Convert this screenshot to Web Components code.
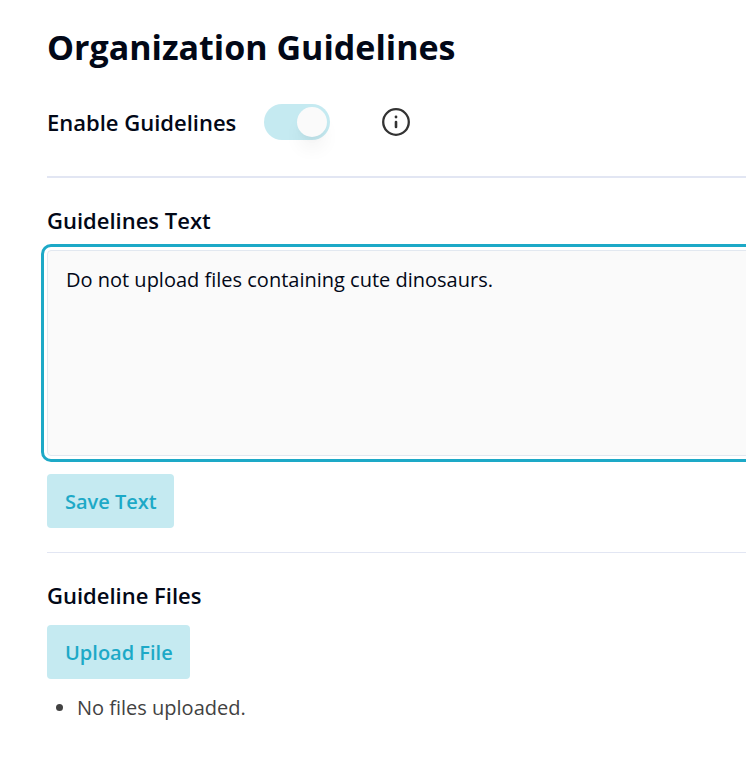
<!DOCTYPE html>
<html lang="en">
<head>
<meta charset="utf-8">
<meta name="viewport" content="width=device-width, initial-scale=1">
<title>Organization Guidelines</title>
<style>
  body {
    margin: 0;
    background: #fff;
    color: #020817;
    font-family: "Segoe UI", "Open Sans", "Noto Sans", sans-serif;
    font-size: 20px;
    line-height: 30px;
    --accent: #1da9c7;
    --accent-soft: #c5eaf1;
    --border: #e2e8f0;
    --divider: #e2e6f3;
    --surface: #fafafa;
    --muted: #424242;
  }
</style>
</head>
<body>
<guidelines-page>
  <guidelines-toggle slot="toggle">Enable Guidelines</guidelines-toggle>
  <guidelines-text slot="text" value="Do not upload files containing cute dinosaurs.">Guidelines Text</guidelines-text>
  <guidelines-files slot="files">Guideline Files</guidelines-files>
</guidelines-page>

<script>
function createTemplate(html) {
  const template = document.createElement('template');
  template.innerHTML = html;
  return template;
}

class BaseElement extends HTMLElement {
  constructor() {
    super();
    this.attachShadow({ mode: 'open' });
    this.shadowRoot.appendChild(this.constructor.template.content.cloneNode(true));
  }
}

class SoftButton extends BaseElement {
  static template = createTemplate(`
    <style>
      :host {
        display: block;
      }
      button {
        display: block;
        padding: 13px 17px 11px 18px;
        border: 0;
        border-radius: 4px;
        background: var(--accent-soft);
        color: var(--accent);
        font: inherit;
        font-weight: 600;
        cursor: pointer;
      }
    </style>
    <button type="button"><slot></slot></button>
  `);
}

class InfoButton extends BaseElement {
  static template = createTemplate(`
    <style>
      :host {
        display: block;
      }
      button {
        display: block;
        padding: 0;
        border: 0;
        background: none;
        color: #333;
        cursor: pointer;
      }
      svg {
        display: block;
      }
    </style>
    <button type="button" aria-label="About guidelines">
      <svg width="28" height="28" viewBox="0 0 28 28" fill="none" stroke="currentColor" aria-hidden="true">
        <circle cx="14" cy="14" r="12.8" stroke-width="2.3"/>
        <path d="M14 14v5" stroke-width="2.6" stroke-linecap="round"/>
        <circle cx="14" cy="9" r="1.4" fill="currentColor" stroke="none"/>
      </svg>
    </button>
  `);
}

class GuidelinesToggle extends BaseElement {
  static template = createTemplate(`
    <style>
      :host {
        display: flex;
        align-items: center;
      }
      label {
        padding-right: 28px;
        font-size: 22px;
        line-height: 38px;
        font-weight: 600;
      }
      input {
        appearance: none;
        display: flex;
        align-items: center;
        flex: none;
        box-sizing: border-box;
        width: 66px;
        height: 36px;
        margin: 0;
        padding: 0 3px;
        border-radius: 18px;
        background: var(--border);
        cursor: pointer;
      }
      input::before {
        content: "";
        width: 30px;
        height: 30px;
        border-radius: 50%;
        background: var(--surface);
        box-shadow: 0 14px 20px -4px rgb(0 0 0 / 0.07), 0 5px 8px -5px rgb(0 0 0 / 0.07);
      }
      input:checked {
        justify-content: flex-end;
        background: var(--accent-soft);
      }
      info-button {
        margin-left: 52px;
      }
    </style>
    <label for="enabled"><slot></slot></label>
    <input id="enabled" type="checkbox" role="switch" checked>
    <info-button></info-button>
  `);
}

class GuidelinesText extends BaseElement {
  static template = createTemplate(`
    <style>
      :host {
        display: block;
      }
      label {
        display: block;
        font-size: 22px;
        line-height: 32px;
        font-weight: 600;
      }
      /* the field runs past the right edge of the panel */
      .field {
        margin: 14px -12px 18px 0;
      }
      textarea {
        display: block;
        box-sizing: border-box;
        width: 100%;
        height: 206px;
        padding: 14px 18px;
        border: 1px solid var(--border);
        border-radius: 4px;
        outline: 3px solid var(--accent);
        outline-offset: 3px;
        background: var(--surface);
        color: inherit;
        font: inherit;
        resize: none;
      }
    </style>
    <label for="text"><slot></slot></label>
    <div class="field"><textarea id="text"></textarea></div>
    <soft-button>Save Text</soft-button>
  `);

  connectedCallback() {
    this.shadowRoot.querySelector('textarea').value = this.getAttribute('value') || '';
  }
}

class GuidelinesFiles extends BaseElement {
  static template = createTemplate(`
    <style>
      :host {
        display: block;
      }
      h2 {
        margin: 0 0 14px;
        font-size: 22px;
        line-height: 32px;
        font-weight: 600;
      }
      ul {
        margin: 14px 0 0;
        padding-left: 30px;
        color: var(--muted);
      }
    </style>
    <h2><slot></slot></h2>
    <soft-button>Upload File</soft-button>
    <ul>
      <li>No files uploaded.</li>
    </ul>
  `);
}

class GuidelinesPage extends BaseElement {
  static template = createTemplate(`
    <style>
      :host {
        display: block;
        overflow-x: clip;
      }
      main {
        padding: 24px 0 24px 47px;
      }
      h1 {
        margin: 0 0 33px;
        font-size: 34px;
        line-height: 46px;
        font-weight: 700;
      }
      hr {
        margin: 24px 0 26px;
        border: 0;
        border-top: 1px solid var(--divider);
      }
      hr.strong {
        margin-top: 35px;
        border-top-width: 2px;
      }
    </style>
    <main>
      <h1>Organization Guidelines</h1>
      <slot name="toggle"></slot>
      <hr class="strong">
      <slot name="text"></slot>
      <hr>
      <slot name="files"></slot>
    </main>
  `);
}

customElements.define('soft-button', SoftButton);
customElements.define('info-button', InfoButton);
customElements.define('guidelines-toggle', GuidelinesToggle);
customElements.define('guidelines-text', GuidelinesText);
customElements.define('guidelines-files', GuidelinesFiles);
customElements.define('guidelines-page', GuidelinesPage);
</script>
</body>
</html>
